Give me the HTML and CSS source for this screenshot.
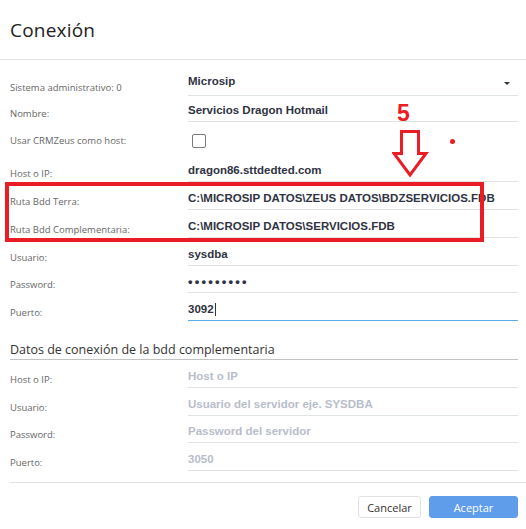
FILE: index.html
```html
<!DOCTYPE html>
<html lang="es">
<head>
<meta charset="utf-8">
<title>Conexión</title>
<link rel="stylesheet" href="styles.css">
</head>
<body>
<div class="dialog">
  <header class="dlg-head"><h1 class="dlg-title">Conexión</h1></header>
  <div class="form">
    <div class="row">
      <span class="lbl">Sistema administrativo: 0</span>
      <div class="field field-select">Microsip<span class="caret"></span></div>
    </div>
    <div class="row row-s">
      <span class="lbl">Nombre:</span>
      <div class="field">Servicios Dragon Hotmail</div>
    </div>
    <div class="row row-check">
      <span class="lbl">Usar CRMZeus como host:</span>
      <div class="check-wrap"><span class="checkbox"></span></div>
    </div>
    <div class="row">
      <span class="lbl">Host o IP:</span>
      <div class="field">dragon86.sttdedted.com</div>
    </div>
    <div class="row">
      <span class="lbl">Ruta Bdd Terra:</span>
      <div class="field">C:\MICROSIP DATOS\ZEUS DATOS\BDZSERVICIOS.FDB</div>
    </div>
    <div class="row">
      <span class="lbl">Ruta Bdd Complementaria:</span>
      <div class="field">C:\MICROSIP DATOS\SERVICIOS.FDB</div>
    </div>
    <div class="row">
      <span class="lbl">Usuario:</span>
      <div class="field">sysdba</div>
    </div>
    <div class="row row-m">
      <span class="lbl">Password:</span>
      <div class="field field-pass">•••••••••</div>
    </div>
    <div class="row">
      <span class="lbl">Puerto:</span>
      <div class="field field-focus">3092<span class="cursor"></span></div>
    </div>
    <h2 class="section">Datos de conexión de la bdd complementaria</h2>
    <div class="row">
      <span class="lbl">Host o IP:</span>
      <div class="field ph">Host o IP</div>
    </div>
    <div class="row">
      <span class="lbl">Usuario:</span>
      <div class="field ph">Usuario del servidor eje. SYSDBA</div>
    </div>
    <div class="row row-m">
      <span class="lbl">Password:</span>
      <div class="field ph">Password del servidor</div>
    </div>
    <div class="row">
      <span class="lbl">Puerto:</span>
      <div class="field ph">3050</div>
    </div>
  </div>
  <footer class="dlg-foot">
    <button class="btn btn-cancel">Cancelar</button>
    <button class="btn btn-ok">Aceptar</button>
  </footer>

  <div class="mark-box"></div>
  <span class="mark-num">5</span>
  <svg class="mark-arrow" width="40" height="50" viewBox="0 0 40 50">
    <path d="M9.5 1.5 H26.5 V23.5 H34 L18 45 L2 23.5 H9.5 Z" fill="none" stroke="#ec1c24" stroke-width="3" stroke-linejoin="miter"/>
  </svg>
  <span class="mark-dot"></span>
</div>
</body>
</html>
```

FILE: styles.css
```css
* { box-sizing: border-box; }
html, body { margin: 0; padding: 0; background: #fff; }
body { font-family: "Liberation Sans", Arial, sans-serif; }

.dialog { position: relative; width: 526px; height: 529px; background: #fff; }

.dlg-head {
  height: 60px;
  border-bottom: 1px solid #e2e2e2;
  display: flex;
  align-items: center;
  padding-left: 10px;
}
.dlg-title {
  margin: 0;
  font-family: "Open Sans", "Liberation Sans", sans-serif;
  font-weight: 400;
  font-size: 19px;
  color: #222;
  letter-spacing: 0.2px;
}

.form { padding: 8px 8px 0 10px; }

.row {
  display: grid;
  grid-template-columns: 178px 330px;
  height: 28px;
  align-items: end;
}
.row-s { height: 26px; }
.row-m { height: 27px; }
.row-check { height: 32px; align-items: center; padding-top: 6px; }

.lbl {
  font-family: "Open Sans", "Liberation Sans", sans-serif;
  font-size: 9.5px;
  line-height: 12px;
  color: #666;
  padding-bottom: 2px;
  white-space: nowrap;
}
.row-check .lbl { padding-bottom: 0; }

.field {
  height: 100%;
  border-bottom: 1px solid #dfe5e3;
  display: flex;
  align-items: flex-end;
  padding-bottom: 4px;
  font-weight: 700;
  font-size: 11.5px;
  line-height: 14px;
  color: #2f3342;
  white-space: nowrap;
  position: relative;
}
.field-select { padding-bottom: 7px; }
.caret {
  position: absolute;
  right: 8px;
  top: 14px;
  width: 0; height: 0;
  border-left: 3px solid transparent;
  border-right: 3px solid transparent;
  border-top: 3px solid #333;
}
.field-pass { letter-spacing: 2.2px; font-size: 13px; padding-bottom: 3px; }
.field-focus { border-bottom-color: #5aabe8; }
.cursor { display: inline-block; width: 1px; height: 13px; background: #333; margin-left: 1px; }
.ph { color: #b9bdca; }

.check-wrap { display: flex; align-items: center; padding-left: 4px; }
.checkbox {
  width: 14px; height: 14px;
  border: 1px solid #7a7a7a;
  border-radius: 2px;
  background: #fff;
}

.section {
  margin: 0;
  padding-top: 20px;
  font-family: "Open Sans", "Liberation Sans", sans-serif;
  font-weight: 400;
  font-size: 12.5px;
  line-height: 18px;
  color: #333;
  border-bottom: 1px solid #c2c2c2;
}

.dlg-foot {
  margin: 11px 0 0 10px;
  border-top: 1px solid #e2e2e2;
  padding: 13px 8px 0 0;
  display: flex;
  justify-content: flex-end;
  gap: 8px;
}
.btn {
  height: 22px;
  font-family: "Open Sans", "Liberation Sans", sans-serif;
  font-size: 11px;
  border-radius: 3px;
  padding: 0;
  cursor: pointer;
}
.btn-cancel { width: 63px; background: #fff; border: 1px solid #e2e2e2; color: #333; }
.btn-ok { width: 89px; background: #5f9cea; border: 1px solid #5f9cea; color: #fff; }

.mark-box {
  position: absolute;
  left: 5px; top: 182px;
  width: 479px; height: 60px;
  border: 4px solid #ec1c24;
}
.mark-num {
  position: absolute;
  left: 397px; top: 100px;
  font-family: "Liberation Sans", sans-serif;
  font-weight: 700;
  font-size: 23px;
  line-height: 26px;
  color: #ec1c24;
}
.mark-arrow { position: absolute; left: 392px; top: 130px; }
.mark-dot {
  position: absolute;
  left: 450px; top: 139px;
  width: 5px; height: 5px;
  border-radius: 50%;
  background: #ec1c24;
}
```
